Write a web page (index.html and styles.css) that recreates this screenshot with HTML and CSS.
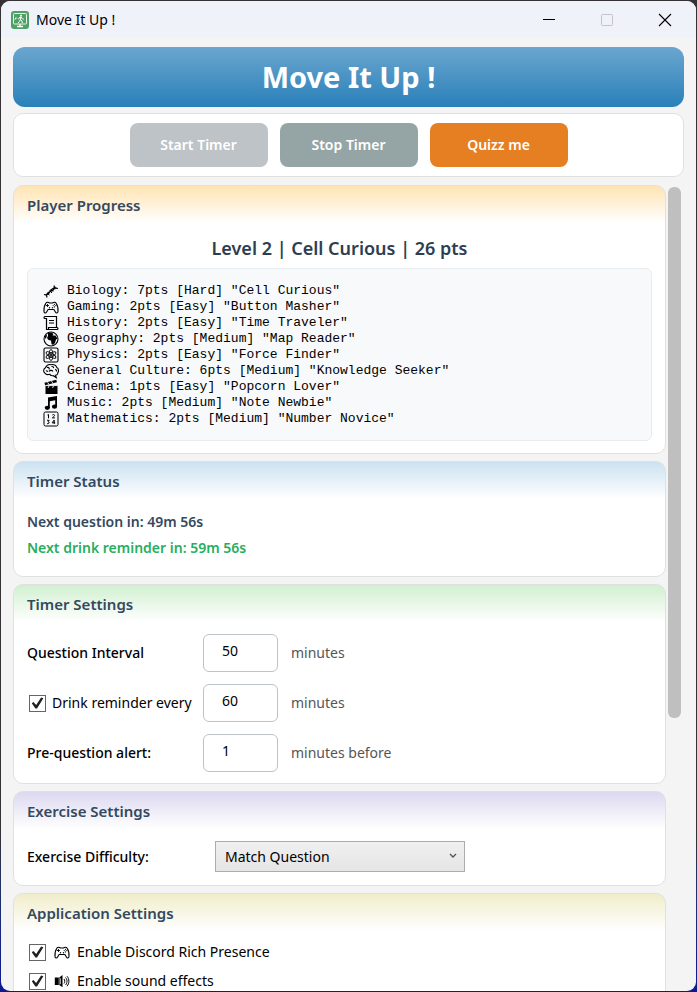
FILE: index.html
```html
<!DOCTYPE html>
<html lang="en">
<head>
<meta charset="utf-8">
<title>Move It Up !</title>
<link rel="stylesheet" href="styles.css">
</head>
<body>
<svg class="defs" aria-hidden="true">
  <symbol id="pad" viewBox="0 0 16 16">
    <path d="M1 12.500C.8 9.500 1.500 6 2.800 4.300 3.700 3 5.500 3 6.500 4h3c1-1 2.800-1 3.700.3C14.500 6 15.200 9.500 15 12.500c-.1 1.800-1.800 2-2.600.6L10.900 10.500H5.100L3.600 13.100C2.800 14.500 1.100 14.300 1 12.500z" fill="none" stroke="currentColor" stroke-width="1.100"/>
    <path d="M4.500 5v3M3 6.500h3" stroke="currentColor" stroke-width=".9"/>
    <circle cx="11.500" cy="5.300" r=".6"/><circle cx="12.800" cy="6.600" r=".6"/><circle cx="10.200" cy="6.600" r=".6"/><circle cx="11.500" cy="7.900" r=".6"/>
    <circle cx="6.500" cy="8.700" r=".7"/><circle cx="9.500" cy="8.700" r=".7"/>
  </symbol>
</svg>
<div class="window">
  <header class="titlebar">
    <svg class="app-icon" viewBox="0 0 18 18" aria-hidden="true">
      <rect width="18" height="18" rx="3" fill="#4fa064"/>
      <rect x="2.500" y="2.500" width="13" height="10.500" rx=".8" fill="none" stroke="#e9f5eb"/>
      <path d="M9 13v2M6 15.500h6" stroke="#fff" stroke-width="1.300"/>
      <circle cx="10" cy="4.700" r="1" fill="#fff"/>
      <path d="M10 6 9.400 8.600 11 10l.4 2M9.400 8.600 8.600 10.300 7 12M7.600 8.300 8.400 6.600 10 6l1.200 1.700 1.600.5M4 8.600l1-2 1 1" fill="none" stroke="#fff" stroke-width="1"/>
    </svg>
    <span class="caption">Move It Up !</span>
    <div class="window-controls">
      <button type="button" aria-label="Minimize"><svg viewBox="0 0 14 14"><path d="M1 6.500h12" stroke="#000" stroke-width="1"/></svg></button>
      <button type="button" aria-label="Maximize" disabled><svg viewBox="0 0 14 14"><rect x="1.500" y="1.500" width="11" height="11" rx="1" fill="none" stroke="#c2c2c8"/></svg></button>
      <button type="button" aria-label="Close"><svg viewBox="0 0 14 14"><path d="m1 1 12 12M13 1 1 13" stroke="#000" stroke-width="1.100"/></svg></button>
    </div>
  </header>

  <main class="content">
    <h1 class="banner">Move It Up !</h1>
    <div class="actions">
      <button type="button" class="action start" disabled>Start Timer</button>
      <button type="button" class="action stop">Stop Timer</button>
      <button type="button" class="action quiz">Quizz me</button>
    </div>

    <div class="scroller">
      <div class="cards">
        <section class="card progress">
          <h2>Player Progress</h2>
          <p class="level">Level 2 | Cell Curious | 26 pts</p>
          <ul class="subjects">
            <li><svg viewBox="0 0 16 16"><path d="M1 11.500c4 1.500 5-1 6-3S10 4 15 5.500M4 14.500c-1.500-4 1-5 3.500-6S12.500 6.500 11 2.500" fill="none" stroke="currentColor" stroke-width="1.200"/><path d="m2.800 12 1.200 1.200M5 11l1.500 1M6.500 7.500l2.500 2.500M8 6.500 10 8.500M10.500 5l2 .8M11.800 3.500l1.500 1.500" stroke="currentColor" stroke-width="1"/></svg>Biology: 7pts [Hard] "Cell Curious"</li>
            <li><svg><use href="#pad"/></svg>Gaming: 2pts [Easy] "Button Masher"</li>
            <li><svg viewBox="0 0 16 16"><path d="M3.500 12.500V3M2 1.500h11.500V12M2 1.500c-1.300 0-1.300 2 0 2h1.500M3.500 12.500V14.500H14c1.300 0 1.300-2 0-2H5.500v2" fill="none" stroke="currentColor" stroke-width="1.200"/><path d="M6 5.500h5M6 8h5" stroke="currentColor" stroke-width="1"/></svg>History: 2pts [Easy] "Time Traveler"</li>
            <li><svg viewBox="0 0 16 16"><circle cx="8" cy="8" r="7" fill="none" stroke="currentColor" stroke-width="1.100"/><path d="M5 2 8.500 1.500l2 1.500-1 1.500h3l2 3-1.500 1-1 3.500-2 2-1.500-1-.5-3.500-2.500-.5L4 7l1-2zM1.500 6l2-2.500L4 5 2.500 8z"/></svg>Geography: 2pts [Medium] "Map Reader"</li>
            <li><svg viewBox="0 0 16 16"><g fill="none" stroke="currentColor"><rect x="1" y="1" width="14" height="14" rx="1.500" stroke-width="1.100"/><g stroke-width=".9"><ellipse cx="8" cy="8" rx="2" ry="5.500"/><ellipse cx="8" cy="8" rx="2" ry="5.500" transform="rotate(60 8 8)"/><ellipse cx="8" cy="8" rx="2" ry="5.500" transform="rotate(120 8 8)"/></g></g><circle cx="8" cy="8" r="1.100"/></svg>Physics: 2pts [Easy] "Force Finder"</li>
            <li><svg viewBox="0 0 16 16"><path d="M1.800 10C0 8.500.5 5.500 2.500 4.700 3.500 2.200 6 1.200 8 1.700c2.800-.7 5.300.5 5.800 2.800 2 1 2.200 4 1 5.200.2 1.800-1.300 2.500-2.300 2.500l.8 2.500-3-2c-2 .3-3.300-.5-3.500-1.500C4.500 12 2.800 11.500 1.800 10zM4 4.500c2-.5 2.500 1 2 2M8.500 3.500c1.500-.3 2.300.7 2 1.700M6 8.500c1-1.500 3-1.500 4 0M12 6.500c1.200 0 1.800 1 1.500 2M3 8c.8-.3 1.500 0 1.800.8" fill="none" stroke="currentColor" stroke-width="1.100"/></svg>General Culture: 6pts [Medium] "Knowledge Seeker"</li>
            <li><svg viewBox="0 0 16 16"><path d="M2.500 6.500h12V15h-12zM1.500 3.800 13.300.8l.6 2.500L2.100 6.300z"/><path d="m4.500 3.200 1.500 2.200M8.500 2.200 10 4.400M6 7 5 9M10.500 7l-1 2M2.500 6.600h12" stroke="#f7f9fb" stroke-width=".9"/></svg>Cinema: 1pts [Easy] "Popcorn Lover"</li>
            <li><svg viewBox="0 0 16 16"><path d="M5 2.500 14 1v10.500h-1.800V5.300L6.800 6.200V13H5z"/><ellipse cx="4.300" cy="12.800" rx="2.600" ry="2.100"/><ellipse cx="11.500" cy="11.700" rx="2.600" ry="2.100"/></svg>Music: 2pts [Medium] "Note Newbie"</li>
            <li><svg viewBox="0 0 16 16"><g fill="none" stroke="currentColor" stroke-width="1"><rect x="1" y="1" width="14" height="14" rx="1.500"/><path d="M4.500 4 5.500 3.500V7.300M9.300 4.200c.5-1 2.200-.8 2.200.2 0 .8-1 1.400-2.200 2.500h2.600M4 9.300h2.200L5 10.800c1.800 0 1.500 2.200-.9 1.900M11.200 13V9L9.200 11.800h3"/></g></svg>Mathematics: 2pts [Medium] "Number Novice"</li>
          </ul>
        </section>

        <section class="card status">
          <h2>Timer Status</h2>
          <p class="next">Next question in: 49m 56s</p>
          <p class="next drink">Next drink reminder in: 59m 56s</p>
        </section>

        <section class="card timer">
          <h2>Timer Settings</h2>
          <div class="setting">
            <label class="name" for="interval">Question Interval</label>
            <input class="number" id="interval" type="text" value="50">
            <span class="unit">minutes</span>
          </div>
          <div class="setting">
            <label class="check name"><input type="checkbox" checked>Drink reminder every</label>
            <input class="number" type="text" value="60" aria-label="Drink reminder minutes">
            <span class="unit">minutes</span>
          </div>
          <div class="setting">
            <label class="name" for="alert">Pre-question alert:</label>
            <input class="number" id="alert" type="text" value="1">
            <span class="unit">minutes before</span>
          </div>
        </section>

        <section class="card exercise">
          <h2>Exercise Settings</h2>
          <div class="setting">
            <label class="name" for="difficulty">Exercise Difficulty:</label>
            <div class="dropdown">
              <select id="difficulty"><option>Match Question</option></select>
              <svg viewBox="0 0 8 6" aria-hidden="true"><path d="m1 1 3 3 3-3" fill="none" stroke="#555" stroke-width="1.400"/></svg>
            </div>
          </div>
        </section>

        <section class="card application">
          <h2>Application Settings</h2>
          <label class="check option"><input type="checkbox" checked><svg><use href="#pad"/></svg>Enable Discord Rich Presence</label>
          <label class="check option"><input type="checkbox" checked><svg viewBox="0 0 16 16"><path d="M.8 4.500h4V12h-4zM5.300 4.500 8.500 2v12.300L5.300 12z"/><path d="M6.300 5.200v6" stroke="#fff" stroke-width=".8"/><path d="M10 6c1 1 1 3.500 0 4.500M11.500 4.500c2 2 2 5.500 0 7.500M13 3.200c2.500 3 2.500 7 0 10" fill="none" stroke="currentColor" stroke-width="1"/></svg>Enable sound effects</label>
        </section>
      </div>
      <div class="track"><div class="thumb"></div></div>
    </div>
  </main>
</div>
</body>
</html>
```
FILE: styles.css
```css
* {
  box-sizing: border-box;
}

body {
  margin: 0;
  padding: 1px;
  height: 100vh;
  background: linear-gradient(#343234 84%, #20306e 90%, #0b1a90);
  font-family: "Noto Sans", "Open Sans", sans-serif;
  font-size: 14px;
  line-height: 20px;
  color: #000;
}

.defs {
  position: absolute;
  width: 0;
  height: 0;
}

h1, h2, p, ul {
  margin: 0;
  padding: 0;
}

button, input, select {
  font: inherit;
}

.window {
  display: flex;
  flex-direction: column;
  height: 100%;
  overflow: hidden;
  border-radius: 9px;
  background: #f4f4f4;
}

.titlebar {
  display: flex;
  align-items: center;
  height: 37px;
  padding: 0 2px 0 10px;
  background: #f0f2fa;
}

.app-icon {
  width: 18px;
  height: 18px;
}

.caption {
  margin-left: 7px;
}

.window-controls {
  display: flex;
  height: 100%;
  margin-left: auto;
}

.window-controls button {
  display: flex;
  align-items: center;
  justify-content: center;
  width: 58px;
  padding: 0;
  border: 0;
  background: none;
}

.window-controls svg {
  width: 14px;
  height: 14px;
}

.content {
  display: flex;
  flex: 1;
  flex-direction: column;
  min-height: 0;
  padding: 9px 12px 0;
}

.banner {
  height: 60px;
  border-radius: 12px;
  background: linear-gradient(#6ba6cf, #2980b9);
  color: #fff;
  font-size: 29px;
  font-weight: 700;
  line-height: 60px;
  text-align: center;
}

.actions {
  display: flex;
  justify-content: center;
  gap: 12px;
  margin: 6px 0 8px;
  padding: 9px;
  border: 1px solid #e0e0e0;
  border-radius: 10px;
  background: #fff;
}

.action {
  width: 138px;
  height: 44px;
  padding: 0;
  border: 0;
  border-radius: 8px;
  color: #fff;
  font-weight: 600;
}

.start {
  background: #bdc3c7;
}

.stop {
  background: #95a5a5;
}

.quiz {
  background: #e67e22;
}

.scroller {
  display: flex;
  flex: 1;
  gap: 2px;
  min-height: 0;
  overflow: hidden;
}

.cards {
  display: flex;
  flex: 1;
  flex-direction: column;
  gap: 7px;
}

.card {
  --tint: #fff;
  flex: none;
  padding: 9px 13px 13px;
  border: 1px solid #e0e0e0;
  border-radius: 10px;
  background: linear-gradient(var(--tint), #fff 37px) #fff;
}

.progress {
  --tint: #ffe4b3;
}

.status {
  --tint: #cce2f1;
  padding-bottom: 18px;
}

.timer {
  --tint: #d1f0cf;
  padding-bottom: 11px;
}

.exercise {
  --tint: #dcd9f0;
}

.application {
  --tint: #f0edca;
}

.card h2 {
  color: #34495e;
  font-size: 15px;
  font-weight: 600;
  line-height: 20px;
}

.level {
  margin-top: 20px;
  color: #2c3e50;
  font-size: 18px;
  font-weight: 600;
  line-height: 26px;
  text-align: center;
}

.subjects {
  margin-top: 7px;
  padding: 14px 15px 13px;
  border: 1px solid #e9ecef;
  border-radius: 6px;
  background: #f7f9fb;
  font-family: "Liberation Mono", monospace;
  font-size: 13px;
  line-height: 16px;
  list-style: none;
}

.progress {
  padding-bottom: 12px;
}

.subjects li {
  display: flex;
  align-items: center;
  gap: 8px;
}

.subjects svg,
.option svg {
  width: 16px;
  height: 16px;
}

.next {
  margin-top: 6px;
  color: #34495e;
  font-weight: 600;
}

h2 + .next {
  margin-top: 21px;
}

.drink {
  color: #27ae60;
}

.setting {
  display: flex;
  align-items: center;
  margin-top: 12px;
}

h2 + .setting {
  margin-top: 20px;
}

.name {
  width: 176px;
  font-weight: 500;
}

.number {
  width: 75px;
  height: 38px;
  padding: 0 0 5px 18px;
  border: 1px solid #bdc3c7;
  border-radius: 6px;
  background: #fff;
}

.unit {
  margin-left: 13px;
  color: #555;
}

.check {
  display: flex;
  align-items: center;
  font-weight: 400;
}

.check input {
  flex: none;
  width: 17px;
  height: 17px;
  margin: 0 6px 0 2px;
  appearance: none;
  border: 1px solid #666;
  background: #fff;
}

.check input:checked::before {
  content: "";
  display: block;
  width: 15px;
  height: 15px;
  background: #212121;
  clip-path: polygon(12% 52%, 23% 44%, 41% 64%, 74% 13%, 89% 18%, 47% 86%, 36% 86%);
}

.exercise .name {
  width: 188px;
}

.dropdown {
  position: relative;
  width: 250px;
}

.dropdown select {
  display: block;
  width: 100%;
  height: 31px;
  padding: 0 9px;
  appearance: none;
  border: 1px solid #acacac;
  border-radius: 0;
  background: linear-gradient(#f0f0f0, #e5e5e5);
  color: #000;
}

.dropdown svg {
  position: absolute;
  top: 12px;
  right: 8px;
  width: 8px;
  height: 6px;
}

.option {
  margin-top: 9px;
}

h2 + .option {
  margin-top: 19px;
}

.option svg {
  margin: 0 7px 0 2px;
}

.track {
  width: 16px;
  padding-top: 2px;
}

.thumb {
  width: 13px;
  height: 66%;
  border-radius: 6px;
  background: #bfbfbf;
}
```
